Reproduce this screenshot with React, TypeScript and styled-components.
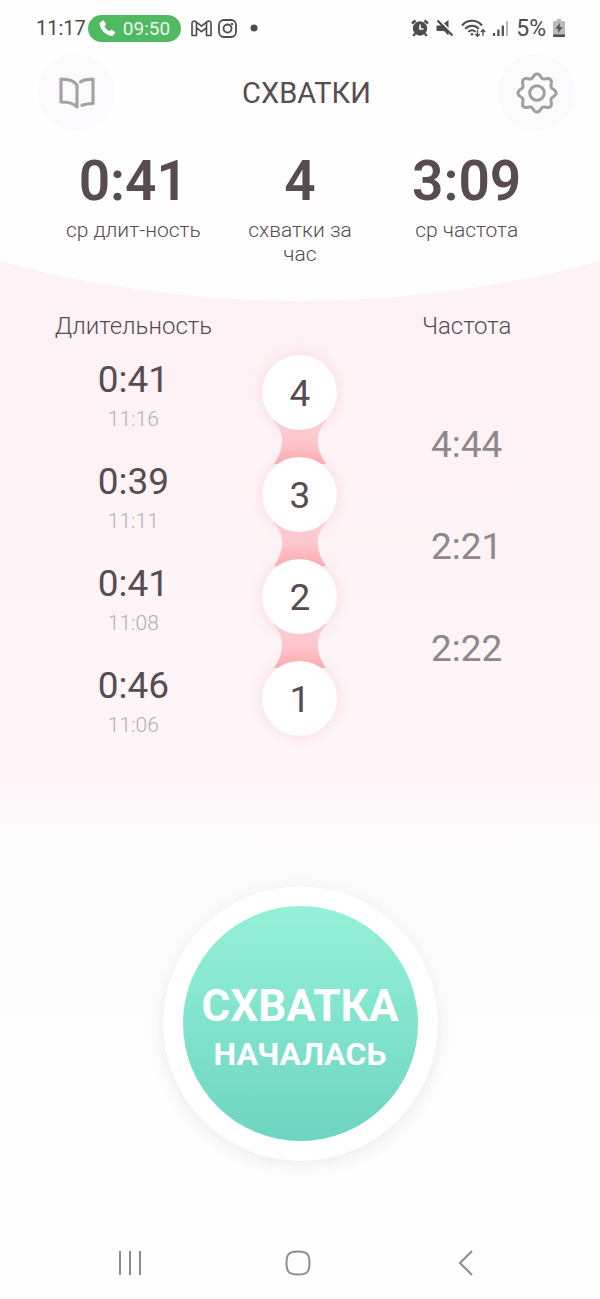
import React from "react";
import styled, { createGlobalStyle } from "styled-components";

const GlobalStyle = createGlobalStyle`
  * { box-sizing: border-box; }
  body { margin: 0; background: #fefefe; }
  button { font: inherit; color: inherit; border: 0; padding: 0; cursor: pointer; }
  svg { display: block; }
`;

const Screen = styled.div`
  min-height: 100vh;
  display: flex;
  flex-direction: column;
  font-family: Roboto, "Liberation Sans", sans-serif;
  color: #584c51;
  background: linear-gradient(180deg, #fcf1f5 0, #fdf2f5 320px, #fdf6f8 780px, #fcfbfc 850px, #fefefe 1150px);
`;

const Hero = styled.header`
  height: 301px;
  background: #fefefe;
  clip-path: ellipse(191% 1145px at 50% calc(100% - 1145px));
`;

const StatusBar = styled.div`
  height: 54px;
  padding: 2px 35px 0 36px;
  display: flex;
  align-items: center;
  justify-content: space-between;
  color: #4c4c4c;
`;

const StatusGroup = styled.div<{ $gap: number }>`
  display: flex;
  align-items: center;
  gap: ${(p) => p.$gap}px;
`;

const Clock = styled.time`
  font-size: 20px;
`;

const BatteryLevel = styled.span`
  font-size: 23px;
`;

const CallPill = styled.span`
  display: flex;
  align-items: center;
  gap: 7px;
  height: 27px;
  margin: 0 4px 0 -4px;
  padding: 0 11px;
  border-radius: 14px;
  background: #52b963;
  color: #e9f8eb;
  font-size: 19px;
`;

const TopBar = styled.div`
  display: flex;
  align-items: center;
  justify-content: space-between;
  padding: 0 25px 0 38px;
`;

const Title = styled.h1`
  margin: 0;
  font-size: 29px;
  line-height: 36px;
  font-weight: 400;
`;

const RoundButton = styled.button`
  width: 77px;
  height: 77px;
  border-radius: 50%;
  display: grid;
  place-items: center;
  background: #fbfbfd;
`;

const Stats = styled.dl`
  margin: 0;
  padding: 17px 50px 0;
  display: grid;
  grid-template-columns: repeat(3, 1fr);
  text-align: center;
`;

const Stat = styled.div`
  display: flex;
  flex-direction: column-reverse;
  justify-content: flex-end;
`;

const StatValue = styled.dd`
  margin: 0;
  font-size: 55px;
  line-height: 66px;
  font-weight: 600;
`;

const StatLabel = styled.dt`
  margin: 4px auto 0;
  max-width: 140px;
  font-size: 21px;
  line-height: 24px;
  font-weight: 300;
`;

const Log = styled.table`
  width: calc(100% - 100px);
  margin: 7px 50px 0;
  table-layout: fixed;
  border-collapse: collapse;
  text-align: center;
  th, td { padding: 0; }
`;

const ColumnHead = styled.th`
  height: 35px;
  font-size: 24px;
  line-height: 30px;
  font-weight: 300;
`;

const HalfRow = styled.tr`
  height: 51px;
`;

const DurationCell = styled.td`
  vertical-align: top;
`;

const Duration = styled.div`
  padding-top: 15px;
  font-size: 37px;
  line-height: 44px;
`;

const StartTime = styled.div`
  font-size: 21px;
  line-height: 34px;
  font-weight: 300;
  color: #b5aeb1;
`;

const Interval = styled.td`
  font-size: 37px;
  line-height: 44px;
  color: #8f888b;
`;

const BeadCell = styled.td`
  position: relative;
  vertical-align: top;
`;

const Bead = styled.div`
  position: relative;
  z-index: 1;
  width: 75px;
  height: 75px;
  margin: 12px auto 0;
  padding-top: 2px;
  border-radius: 50%;
  display: grid;
  place-items: center;
  background: #fff;
  box-shadow: 0 0 14px rgba(250, 140, 150, 0.26);
  font-size: 37px;
  line-height: 44px;
`;

const Link = styled.svg`
  position: absolute;
  left: calc(50% - 27px);
  top: 77px;
`;

const Action = styled.main`
  flex: 1;
  display: flex;
  justify-content: center;
  align-items: flex-start;
  padding: 135px 0 60px;
`;

const StartButton = styled.button`
  width: 275px;
  height: 275px;
  border-radius: 50%;
  display: grid;
  place-items: center;
  background: #fff;
  box-shadow: 0 4px 16px rgba(90, 70, 80, 0.1);
`;

const StartFace = styled.span`
  width: 235px;
  height: 235px;
  border-radius: 50%;
  display: flex;
  flex-direction: column;
  align-items: center;
  justify-content: center;
  padding-top: 12px;
  background: linear-gradient(180deg, #95f1d8, #6ed5c0);
  color: #fff;
  font-weight: 700;
`;

const StartLine = styled.span<{ $size: number }>`
  font-size: ${(p) => p.$size}px;
  line-height: 48px;
`;

const NavBar = styled.nav`
  display: grid;
  grid-template-columns: repeat(3, 1fr);
  padding: 0 50px 0 46px;
  height: 73px;
`;

const NavButton = styled.button`
  display: grid;
  place-items: center;
  background: none;
`;

const stats = [
  { value: "0:41", label: "ср длит-ность" },
  { value: "4", label: "схватки за час" },
  { value: "3:09", label: "ср частота" },
];

const entries = [
  { n: 4, duration: "0:41", start: "11:16", interval: "4:44" },
  { n: 3, duration: "0:39", start: "11:11", interval: "2:21" },
  { n: 2, duration: "0:41", start: "11:08", interval: "2:22" },
  { n: 1, duration: "0:46", start: "11:06", interval: "" },
];

// Outline of the eight-toothed gear: a circle whose radius swells once per tooth.
const gearPath = (() => {
  const pts: string[] = [];
  for (let i = 0; i < 160; i++) {
    const a = (i / 160) * Math.PI * 2;
    const r = 17.2 + 1.9 * Math.cos(8 * a);
    pts.push(`${(22 + r * Math.sin(a)).toFixed(2)} ${(22 - r * Math.cos(a)).toFixed(2)}`);
  }
  return `M${pts.join("L")}Z`;
})();

const PhoneIcon = () => (
  <svg width="17" height="17" viewBox="0 0 17 17" fill="#fff">
    <path d="M1.200 2.600 3.400.8c.5-.4 1.100-.3 1.500.2l1.900 2.700c.3.5.2 1-.2 1.400L5.400 6.300c.9 2 2.700 3.900 4.900 5l1.300-1.200c.4-.4.9-.4 1.400-.1l2.600 1.800c.5.4.6 1 .2 1.500l-1.700 2.100c-.4.5-.9.7-1.500.6C6.300 14.900 1.500 9.800.6 4.200c-.1-.6.1-1.200.6-1.600Z" />
  </svg>
);

const MailIcon = () => (
  <svg width="21" height="17" viewBox="0 0 21 17" fill="none" stroke="#4c4c4c" strokeWidth="1.600" strokeLinejoin="round">
    <path d="M1 3.200C1 1.200 3.200.4 4.700 1.600l5.800 4.500 5.800-4.500C17.800.4 20 1.200 20 3.200V15.500h-4.500V7.800l-5 3.900-5-3.900v7.700H1Z" />
    <path d="M5.500 7.800V2.400M15.500 7.800V2.400" />
  </svg>
);

const InstagramIcon = () => (
  <svg width="19" height="19" viewBox="0 0 19 19" fill="none" stroke="#4c4c4c" strokeWidth="1.800">
    <rect x="1" y="1" width="17" height="17" rx="5" />
    <circle cx="9.500" cy="9.500" r="4" />
    <circle cx="14" cy="5" r="1.200" fill="#4c4c4c" stroke="none" />
  </svg>
);

const AlarmIcon = () => (
  <svg width="18" height="18" viewBox="0 0 18 18" fill="none" stroke="#4c4c4c">
    <circle cx="9" cy="9.500" r="7.200" fill="#4c4c4c" stroke="none" />
    <path d="M1 4.500 4.500 1.500M17 4.500 13.500 1.500M4 14.500 2.500 17M14 14.500 15.500 17" strokeWidth="2.400" />
    <path d="M9 5.500V10h3.500" stroke="#fefefe" strokeWidth="1.600" />
  </svg>
);

const MuteIcon = () => (
  <svg width="18" height="18" viewBox="0 0 18 18">
    <path d="M.5 6.500H5L12.500 1v15.500L8 12H.5Z" fill="#4c4c4c" />
    <path d="M3 .8 18 15.800" stroke="#fefefe" strokeWidth="2" />
    <path d="M1.500 1.500 16.500 16.500" stroke="#4c4c4c" strokeWidth="2.200" />
  </svg>
);

const WifiIcon = () => (
  <svg width="25" height="19" viewBox="0 0 25 19" fill="none" stroke="#4c4c4c" strokeWidth="2">
    <path d="M1 6.500C6.500.2 15.500.2 21 6.500M4.200 9.800c3.800-4.200 9.800-4.200 13.600 0M7.500 12.800c2-2.200 5-2.200 7 0" />
    <circle cx="11" cy="15.200" r="1.300" fill="#4c4c4c" stroke="none" />
    <path d="M16.500 11v6M14.300 15l2.200 2.300 2.200-2.300M22 17v-6M19.800 13 22 10.700l2.200 2.300" strokeWidth="1.300" />
  </svg>
);

const SignalIcon = () => (
  <svg width="16" height="17" viewBox="0 0 16 17" fill="#4c4c4c">
    <rect x="0" y="13" width="2" height="3" />
    <rect x="4.300" y="9.500" width="2.200" height="6.500" />
    <rect x="8.700" y="5.500" width="2.200" height="10.500" />
    <rect x="13" y="1" width="2" height="15" fill="#b9b9b9" />
  </svg>
);

const BatteryIcon = () => (
  <svg width="12" height="18" viewBox="0 0 12 18">
    <path d="M4 0h4v2h2.500c.9 0 1.500.6 1.500 1.500V18H0V3.500C0 2.600.6 2 1.500 2H4Z" fill="#b9b9b9" />
    <path d="M0 15.500h12v1c0 .9-.6 1.500-1.500 1.500h-9C.6 18 0 17.400 0 16.500Z" fill="#4c4c4c" />
    <path d="M7 4 2.500 9.800h3L5 14l4.500-5.800h-3Z" fill="#4c4c4c" />
  </svg>
);

const BookIcon = () => (
  <svg width="36" height="32" viewBox="0 0 36 32" fill="none" stroke="#a6a2a4" strokeWidth="3.200" strokeLinecap="round" strokeLinejoin="round">
    <path d="M18 30c-2.800-3.300-8-5-16-5V2.200c8 0 13.500 1.500 16 6Z" />
    <path d="M21.500 5C24 3 28 2.200 34 2.200V26.500c-4.500 0-7.500.4-11 1.800" />
  </svg>
);

const GearIcon = () => (
  <svg width="44" height="44" viewBox="0 0 44 44" fill="none" stroke="#a19da0" strokeWidth="3">
    <path d={gearPath} strokeLinejoin="round" />
    <circle cx="22" cy="22" r="7.300" />
  </svg>
);

const BeadLink = () => (
  <Link width="54" height="44" viewBox="0 0 54 44" aria-hidden="true">
    <defs>
      <linearGradient id="bead-link" x1="0" y1="0" x2="0" y2="1">
        <stop offset="0.150" stopColor="#fdd3da" />
        <stop offset="0.500" stopColor="#fdc6cd" />
        <stop offset="0.950" stopColor="#fbb2b5" />
      </linearGradient>
    </defs>
    <path d="M0 0C12 12 12 28 1 44H53C42 28 42 12 54 0Z" fill="url(#bead-link)" />
  </Link>
);

export default function App() {
  return (
    <Screen>
      <GlobalStyle />
      <Hero>
        <StatusBar>
          <StatusGroup $gap={6}>
            <Clock>11:17</Clock>
            <CallPill>
              <PhoneIcon />
              09:50
            </CallPill>
            <MailIcon />
            <InstagramIcon />
            <svg width="20" height="8" viewBox="0 0 20 8">
              <circle cx="11" cy="4" r="3.500" fill="#4c4c4c" />
            </svg>
          </StatusGroup>
          <StatusGroup $gap={7}>
            <AlarmIcon />
            <MuteIcon />
            <WifiIcon />
            <SignalIcon />
            <BatteryLevel>5%</BatteryLevel>
            <BatteryIcon />
          </StatusGroup>
        </StatusBar>
        <TopBar>
          <RoundButton aria-label="Журнал">
            <BookIcon />
          </RoundButton>
          <Title>СХВАТКИ</Title>
          <RoundButton aria-label="Настройки">
            <GearIcon />
          </RoundButton>
        </TopBar>
        <Stats>
          {stats.map((s) => (
            <Stat key={s.label}>
              <StatLabel>{s.label}</StatLabel>
              <StatValue>{s.value}</StatValue>
            </Stat>
          ))}
        </Stats>
      </Hero>
      <Log>
        <thead>
          <tr>
            <ColumnHead scope="col">Длительность</ColumnHead>
            <ColumnHead as="td" />
            <ColumnHead scope="col">Частота</ColumnHead>
          </tr>
        </thead>
        <tbody>
          {entries.map((e, i) => (
            <React.Fragment key={e.n}>
              <HalfRow>
                <DurationCell rowSpan={2}>
                  <Duration>{e.duration}</Duration>
                  <StartTime>{e.start}</StartTime>
                </DurationCell>
                <BeadCell rowSpan={2}>
                  <Bead>{e.n}</Bead>
                  {e.interval && <BeadLink />}
                </BeadCell>
                {i === 0 && <td />}
              </HalfRow>
              <HalfRow>{e.interval ? <Interval rowSpan={2}>{e.interval}</Interval> : <td />}</HalfRow>
            </React.Fragment>
          ))}
        </tbody>
      </Log>
      <Action>
        <StartButton>
          <StartFace>
            <StartLine $size={44}>СХВАТКА</StartLine>
            <StartLine $size={32}>НАЧАЛАСЬ</StartLine>
          </StartFace>
        </StartButton>
      </Action>
      <NavBar>
        <NavButton aria-label="Недавние">
          <svg width="24" height="26" viewBox="0 0 24 26" stroke="#8c8c8c" strokeWidth="2">
            <path d="M2 1v24M12 1v24M22 1v24" />
          </svg>
        </NavButton>
        <NavButton aria-label="Домой">
          <svg width="26" height="26" viewBox="0 0 26 26" fill="none" stroke="#8c8c8c" strokeWidth="2">
            <path d="M13 1.500C22 1.500 24.500 4 24.500 13S22 24.500 13 24.500 1.500 22 1.500 13 4 1.500 13 1.500Z" />
          </svg>
        </NavButton>
        <NavButton aria-label="Назад">
          <svg width="16" height="26" viewBox="0 0 16 26" fill="none" stroke="#8c8c8c" strokeWidth="2">
            <path d="M14 1 2 13l12 12" />
          </svg>
        </NavButton>
      </NavBar>
    </Screen>
  );
}
